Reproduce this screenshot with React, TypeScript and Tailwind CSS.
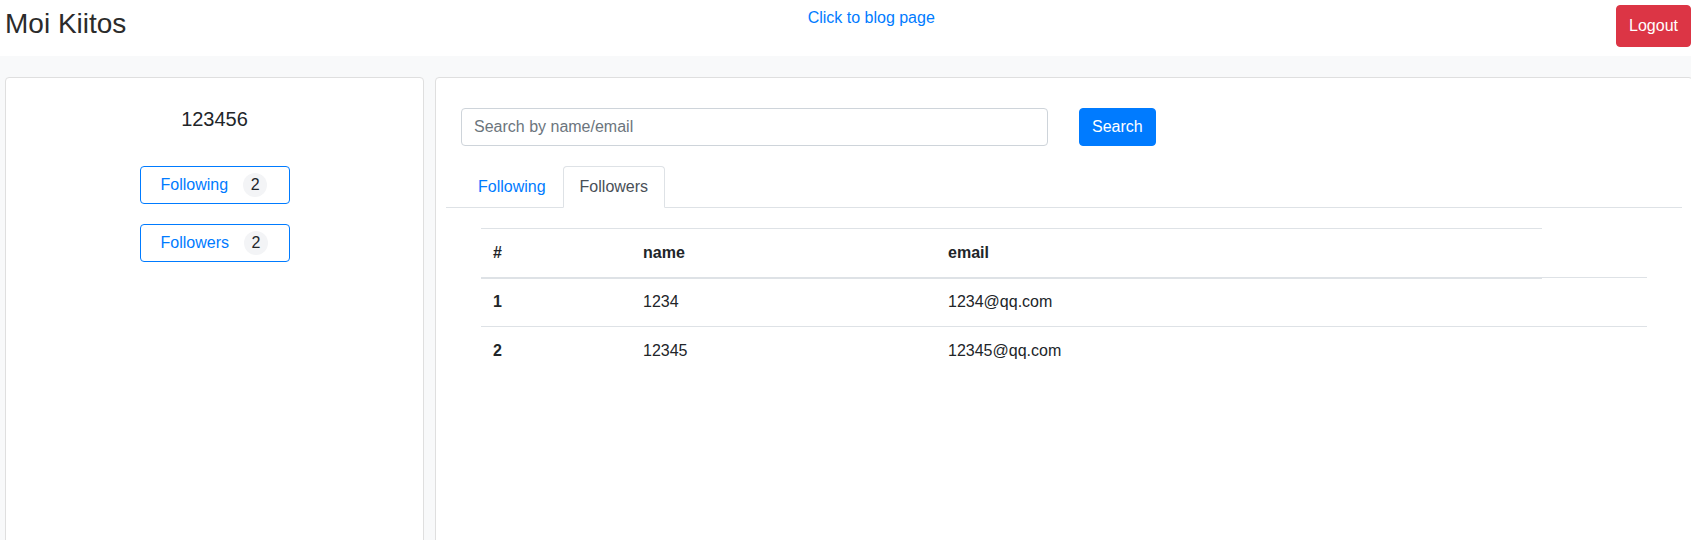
import React from "react";

type Row = { id: number; name: string; email: string };

const rows: Row[] = [
  { id: 1, name: "1234", email: "1234@qq.com" },
  { id: 2, name: "12345", email: "12345@qq.com" },
];

function CountButton({ label, count, className }: { label: string; count: number; className: string }) {
  return (
    <button
      className={`${className} flex h-[38px] w-[150px] items-center rounded-[4px] border border-[#007bff] bg-white pl-[20px] text-base leading-6 text-[#007bff]`}
    >
      <span>{label}</span>
      <span className="ml-[15px] flex h-6 w-6 items-center justify-center rounded-full bg-[#f3f4f6] text-[#212529]">
        {count}
      </span>
    </button>
  );
}

export default function App() {
  return (
    <div className="h-[540px] w-full overflow-hidden bg-white font-['Liberation_Sans',Arial,sans-serif] text-[#212529]">
      <header className="flex h-[56px] items-start justify-between pl-[5px]">
        <h3 className="mt-[7px] text-[28px] leading-[33.6px] font-medium text-[#2b2b2b]">Moi Kiitos</h3>
        <a className="mt-[6px] text-base leading-6 text-[#007bff]" href="#">
          Click to blog page
        </a>
        <button className="mt-[5px] rounded-[4px] border border-[#dc3545] bg-[#dc3545] px-3 py-2 text-base leading-6 text-white">
          Logout
        </button>
      </header>

      <div className="flex gap-[11px] bg-[#f8f9fa] pl-[5px] pt-[21px]">
        <aside className="flex h-[500px] w-[419px] shrink-0 flex-col items-center rounded-[4px] border border-[#dfdfdf] bg-white pt-[29px]">
          <h5 className="text-[20px] leading-6 font-medium">123456</h5>
          <CountButton label="Following" count={2} className="mt-[35px]" />
          <CountButton label="Followers" count={2} className="mt-[20px]" />
        </aside>

        <main className="h-[500px] w-[1258px] shrink-0 rounded-[4px] border border-[#dfdfdf] bg-white px-[10px] pt-[30px]">
          <div className="flex pl-[15px]">
            <input
              className="h-[38px] w-[587px] rounded-[4px] border border-[#ced4da] px-3 text-base leading-6 text-[#495057] placeholder:text-[#6c757d]"
              placeholder="Search by name/email"
            />
            <button className="ml-[31px] h-[38px] rounded-[4px] border border-[#007bff] bg-[#007bff] px-3 text-base leading-6 text-white">
              Search
            </button>
          </div>

          <ul className="mt-5 flex border-b border-[#dee2e6] pl-[15px]">
            <li className="-mb-px">
              <a className="block border border-transparent px-4 py-2 text-base leading-6 text-[#007bff]" href="#">
                Following
              </a>
            </li>
            <li className="-mb-px">
              <a
                className="block rounded-t-[4px] border border-[#dee2e6] border-b-white bg-white px-4 py-2 text-base leading-6 text-[#495057]"
                href="#"
              >
                Followers
              </a>
            </li>
          </ul>

          <div className="mx-[35px] mt-5 text-base leading-6">
            <div className="grid w-[1061px] grid-cols-[150px_305px_1fr] border-t border-b-2 border-[#dee2e6] font-bold">
              <div className="p-3">#</div>
              <div className="p-3">name</div>
              <div className="p-3">email</div>
            </div>
            {rows.map((r, i) => (
              <div
                key={r.id}
                className={`grid grid-cols-[150px_305px_1fr] border-t border-[#dee2e6] ${i === 0 ? "-mt-[2px]" : ""}`}
              >
                <div className="p-3 font-bold">{r.id}</div>
                <div className="p-3">{r.name}</div>
                <div className="p-3">{r.email}</div>
              </div>
            ))}
          </div>
        </main>
      </div>
    </div>
  );
}
